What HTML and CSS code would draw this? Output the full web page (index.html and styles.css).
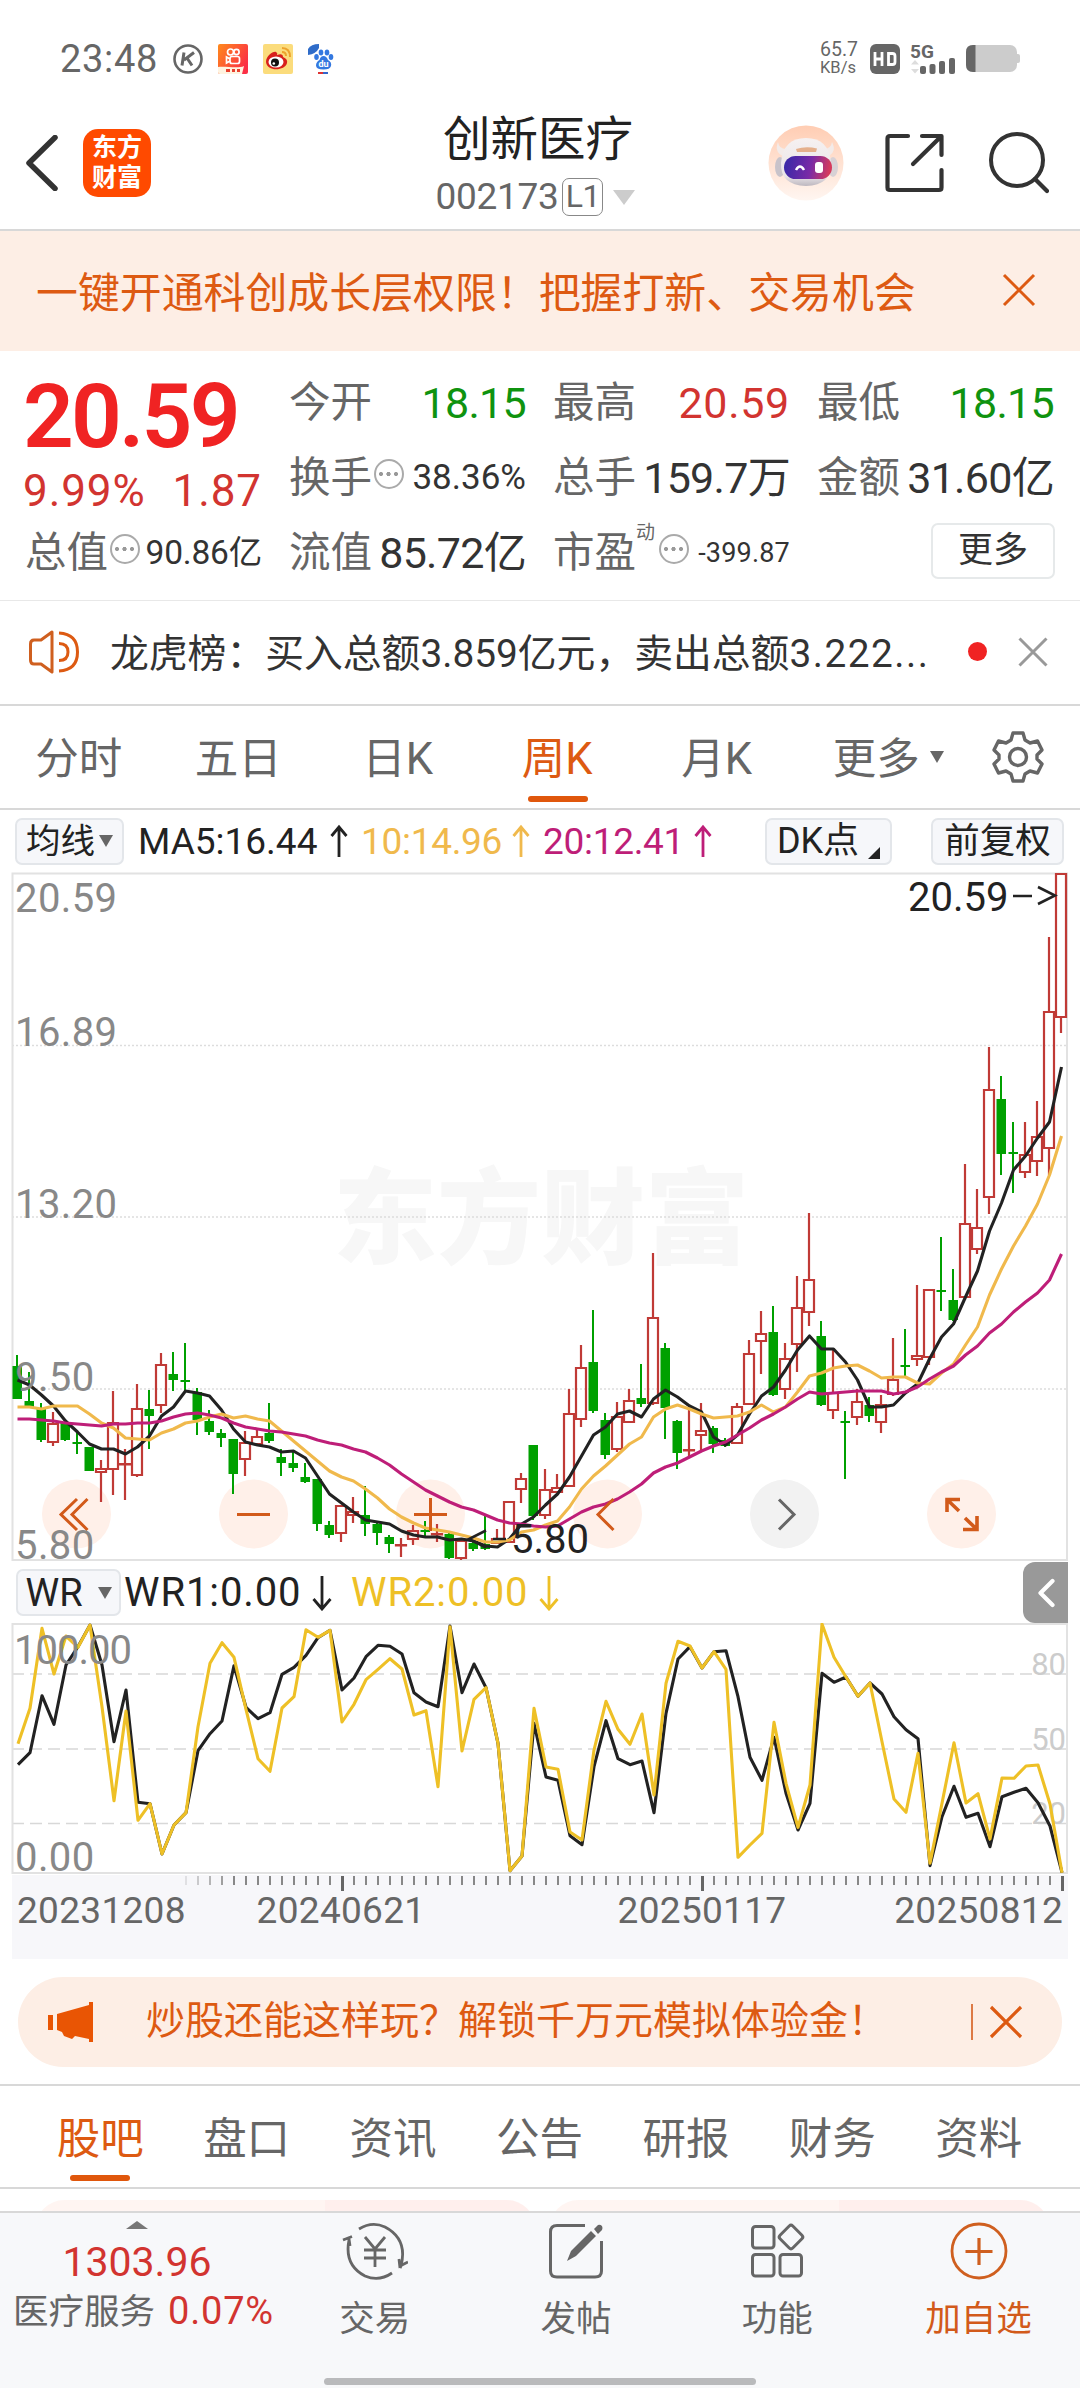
FILE: index.html
```html
<!DOCTYPE html>
<html lang="zh-CN">
<head>
    <meta charset="UTF-8">
    <meta name="viewport" content="width=device-width, initial-scale=1.0">
    <title>创新医疗 002173</title>
    <link rel="stylesheet" href="styles.css">
</head>
<body>
    <div class="status-bar">
        <span class="clock">23:48</span>
        <div class="status-apps">
            <svg width="30" height="30" viewBox="0 0 30 30"><circle cx="15" cy="15" r="13.5" fill="none" stroke="#666" stroke-width="2.6"/><path d="M11 8.500L9 21.500M21 8.500L11 16M14 14L19 21.500" fill="none" stroke="#666" stroke-width="3"/></svg>
            <svg width="30" height="30" viewBox="0 0 30 30">
                <defs><linearGradient id="ks" x1="0" y1="0" x2="1" y2="0.6"><stop offset="0" stop-color="#ff8a1c"/><stop offset="1" stop-color="#fb2f45"/></linearGradient></defs>
                <rect width="30" height="30" rx="2" fill="url(#ks)"/>
                <g fill="none" stroke="#fff" stroke-width="1.700"><circle cx="12.500" cy="8" r="3"/><circle cx="18.500" cy="8" r="2.600"/><rect x="12" y="12.500" width="9.500" height="7" rx="2"/><path d="M12 15L8.500 13V19L12 17"/></g>
                <path d="M0 23C8 22 20 25 26 22L24 30H2Q0 30 0 28Z" fill="#fff3e0"/>
                <path d="M8 25H12V28H8ZM14 25H17V28H14ZM19 25H22V28H19Z" fill="#e8402e"/>
            </svg>
            <svg width="30" height="30" viewBox="0 0 30 30">
                <rect width="30" height="30" rx="2" fill="#fbdc7c"/>
                <path d="M3 18C3 12 10 7 13 8Q15 9 14 11Q20 9 20 13Q25 15 24 19C22 27 4 28 3 18Z" fill="#d8201c"/>
                <ellipse cx="13" cy="18" rx="7.500" ry="5.500" fill="#fff"/><circle cx="12" cy="18.500" r="4" fill="#111"/><circle cx="10.800" cy="19.500" r="1.300" fill="#fff"/>
                <path d="M19 4Q27 4 27 13M19 8Q23 8 23 12" fill="none" stroke="#eda32c" stroke-width="2"/>
            </svg>
            <svg width="26" height="30" viewBox="0 0 26 30">
                <path d="M0 11V5Q3 0 11 0V4Q8 10 0 11Z" fill="#2f6cc9"/>
                <g fill="#3478e0"><ellipse cx="8.500" cy="13" rx="2.300" ry="3"/><ellipse cx="13" cy="8.500" rx="2.300" ry="3"/><ellipse cx="19" cy="8.500" rx="2.300" ry="3"/><ellipse cx="23" cy="13" rx="2.300" ry="3"/><path d="M15.500 12Q18.500 12 20 16Q24 18 23 22Q22 25.500 15.500 25.500Q8 25.500 8 21.500Q8 18 11.500 16Q12.500 12 15.500 12Z"/></g>
                <text x="15.500" y="23" font-size="9" class="du">du</text>
                <path d="M10 29H15" stroke="#d33" stroke-width="2"/><path d="M15 29H20" stroke="#36c" stroke-width="2"/>
            </svg>
        </div>
        <div class="status-right">
            <div class="speed"><span>65.7</span><span class="unit">KB/s</span></div>
            <svg width="30" height="30" viewBox="0 0 30 30"><rect width="30" height="30" rx="6" fill="#666"/><path d="M5 8V22M12 8V22M5 15H12M18.500 9.500H22.500Q25 9.500 25 12V18Q25 20.500 22.500 20.500H18.500Z" fill="none" stroke="#fff" stroke-width="2.800"/></svg>
            <svg class="signal" width="46" height="30" viewBox="0 0 46 30">
                <text x="0" y="14" class="net">5G</text>
                <path d="M5 16L9 20.500H1ZM5 29.500L9 25H1Z" fill="#ddd"/>
                <g fill="#666"><rect x="10" y="22" width="6" height="8" rx="2"/><rect x="19.500" y="20" width="6" height="10" rx="2"/><rect x="29" y="17" width="6" height="13" rx="2"/><rect x="39" y="14" width="6" height="16" rx="2"/></g>
            </svg>
            <svg width="54" height="28" viewBox="0 0 54 28"><rect x="0" y="0" width="51" height="27" rx="7" fill="#ccc"/><path d="M50 9H52Q54 9 54 11V16Q54 18 52 18H50Z" fill="#ccc"/><path d="M9.500 0H7Q0 0 0 7V20Q0 27 7 27H9.500Z" fill="#666"/></svg>
        </div>
    </div>

    <header class="header">
        <div class="header-left">
            <svg width="34" height="56" viewBox="0 0 34 56"><path d="M30 2.500L4 28L30 53.500" fill="none" stroke="#333" stroke-width="5.500" stroke-linecap="round" stroke-linejoin="round"/></svg>
            <div class="logo"><span>东方</span><span>财富</span></div>
        </div>
        <div class="title">
            <h1>创新医疗</h1>
            <div class="code">002173<span class="level">L1</span><i class="caret"></i></div>
        </div>
        <div class="header-right">
            <svg width="76" height="76" viewBox="0 0 76 76">
                <defs>
                    <linearGradient id="rbg" x1="0" y1="0" x2="0" y2="1"><stop offset="0" stop-color="#ffcdb3"/><stop offset="1" stop-color="#fff6f1"/></linearGradient>
                    <linearGradient id="rface" x1="0" y1="0" x2="1" y2="0.1"><stop offset="0" stop-color="#3429a8"/><stop offset="0.6" stop-color="#7a2ba6"/><stop offset="1" stop-color="#d53a5c"/></linearGradient>
                    <linearGradient id="rhead" x1="0" y1="0" x2="0" y2="1"><stop offset="0" stop-color="#f6f1f1"/><stop offset="0.8" stop-color="#e9e4e7"/><stop offset="1" stop-color="#bdb7bf"/></linearGradient>
                </defs>
                <circle cx="38" cy="38" r="37.500" fill="url(#rbg)"/>
                <path d="M10 17Q11 24 18 24L15 31Q6 27 10 17ZM64 17Q63 24 56 24L60 31Q69 27 64 17Z" fill="#f3ebe9"/>
                <ellipse cx="12" cy="42" rx="5" ry="10" fill="#c8c3ca"/><ellipse cx="65" cy="42" rx="5" ry="10" fill="#d8d1d5"/>
                <path d="M38 13Q61 13 63 38Q64 60 38 61Q12 60 13 38Q15 13 38 13Z" fill="url(#rhead)"/>
                <path d="M28 24Q38 21 49 23.500L48 27H29Z" fill="#e5b08c"/>
                <rect x="16" y="31" width="48" height="23" rx="11.500" fill="url(#rface)"/>
                <path d="M28 45Q32 38 36 45" fill="none" stroke="#fff" stroke-width="2.500"/><rect x="47" y="37" width="8" height="11" rx="3" fill="#fff"/>
            </svg>
            <svg width="60" height="60" viewBox="0 0 60 60"><path d="M23 3H5Q2.500 3 2.500 5.500V54.500Q2.500 57 5 57H54Q56.500 57 56.500 54.500V37M37 3H56.500V22M56 3.500L28 31" fill="none" stroke="#333" stroke-width="4.200" stroke-linecap="round" stroke-linejoin="round"/></svg>
            <svg width="60" height="62" viewBox="0 0 60 62"><circle cx="28" cy="28" r="26" fill="none" stroke="#333" stroke-width="4"/><path d="M46 47L58 59" stroke="#333" stroke-width="4.200" stroke-linecap="round"/></svg>
        </div>
    </header>

    <div class="banner">
        <span>一键开通科创成长层权限！把握打新、交易机会</span>
        <svg width="34" height="34" viewBox="0 0 34 34"><path d="M2 2L32 32M32 2L2 32" stroke="#dd5a12" stroke-width="3"/></svg>
    </div>

    <section class="quote">
        <div class="price-box">
            <div class="price">20.59</div>
            <div class="change"><span>9.99%</span><span>1.87</span></div>
        </div>
        <div class="cell"><label>今开</label><b class="down">18.15</b></div>
        <div class="cell"><label>最高</label><b class="up">20.59</b></div>
        <div class="cell"><label>最低</label><b class="down">18.15</b></div>
        <div class="cell"><label>换手</label><i class="more-dot"></i><b class="mid">38.36%</b></div>
        <div class="cell"><label>总手</label><b>159.7万</b></div>
        <div class="cell"><label>金额</label><b>31.60亿</b></div>
        <div class="cell"><label>总值</label><i class="more-dot"></i><b class="small">90.86亿</b></div>
        <div class="cell"><label>流值</label><b>85.72亿</b></div>
        <div class="cell"><label>市盈<sup>动</sup></label><i class="more-dot"></i><b class="tiny">-399.87</b></div>
        <div class="cell cell-btn"><button class="more-btn">更多</button></div>
    </section>

    <div class="news">
        <svg width="50" height="44" viewBox="0 0 50 44"><path d="M23 2L12 10H5Q1.500 10 1.500 14V30Q1.500 34 5 34H12L23 42Z" fill="none" stroke="#cf5f1f" stroke-width="3" stroke-linejoin="round"/><path d="M30 13.500Q39 13.500 39 22Q39 30.500 30 30.500M30 3Q48.500 4 48.500 22Q48.500 40 30 41" fill="none" stroke="#dd5a12" stroke-width="3"/></svg>
        <span class="news-text">龙虎榜：买入总额3.859亿元，卖出总额<span>3.222...</span></span>
        <i class="red-dot"></i>
        <svg width="30" height="30" viewBox="0 0 30 30"><path d="M1.500 1.500L28.500 28.500M28.500 1.500L1.500 28.500" stroke="#999" stroke-width="3"/></svg>
    </div>

    <nav class="periods">
        <span>分时</span>
        <span>五日</span>
        <span>日K</span>
        <span class="active">周K</span>
        <span>月K</span>
        <span class="has-caret">更多<i class="caret-small"></i></span>
        <svg class="gear" width="52" height="52" viewBox="0 0 52 52"><path d="M21 2H31L33 9L38 12L45.500 10L50 19L45 24V28L50 33L45.500 42L38 40L33 43L31 50H21L19 43L14 40L6.500 42L2 33L7 28V24L2 19L6.500 10L14 12L19 9Z" fill="none" stroke="#666" stroke-width="3.400" stroke-linejoin="round"/><circle cx="26" cy="26" r="8.500" fill="none" stroke="#666" stroke-width="3.400"/></svg>
    </nav>

    <div class="ma-bar">
        <button class="chip chip-ma">均线<i class="caret-small"></i></button>
        <span class="ma ma5">MA5:16.44</span>
        <svg class="arrow ma5" width="18" height="34" viewBox="0 0 18 34"><path d="M9 33V3M1.500 12L9 3L16.500 12"/></svg>
        <span class="ma ma10">10:14.96</span>
        <svg class="arrow ma10" width="18" height="34" viewBox="0 0 18 34"><path d="M9 33V3M1.500 12L9 3L16.500 12"/></svg>
        <span class="ma ma20">20:12.41</span>
        <svg class="arrow ma20" width="18" height="34" viewBox="0 0 18 34"><path d="M9 33V3M1.500 12L9 3L16.500 12"/></svg>
        <button class="chip chip-dk">DK点<svg width="12" height="12" viewBox="0 0 12 12"><path d="M12 0V12H0Z" fill="#222"/></svg></button>
        <button class="chip">前复权</button>
    </div>

    <svg class="k-chart" width="1060" height="690" viewBox="10 872 1060 690">
        <text x="541" y="1256" class="watermark">东方财富</text>
        <path d="M12 1045.500H1067M12 1217H1067M12 1389H1067" class="grid-dots"/>
        <path d="M12.500 873.500H1067V1560H12.500Z" class="frame"/>
        <g fill="#fff0e9">
            <circle cx="76.500" cy="1514" r="34.500"/><circle cx="253.500" cy="1514" r="34.500"/><circle cx="430.500" cy="1514" r="34.500"/><circle cx="607.500" cy="1514" r="34.500"/><circle cx="961.500" cy="1514" r="34.500"/>
            <circle cx="784.500" cy="1514" r="34.500" fill="#f2f2f2"/>
        </g>
        <g id="candles"></g>
        <g id="ma-lines"></g>
        <g fill="none" stroke="#d25a1a" stroke-width="3">
            <path d="M77 1499L61 1514.500L77 1530M87.500 1499L72 1514.500L87.500 1530M237 1514.500H270M414 1514.500H447M430.500 1498V1531M613.500 1499L598 1514.500L613.500 1530"/>
            <path d="M960 1499.500H947V1512M947 1499.500L959 1511M977 1516V1529.500H963M977 1529.500L965 1518" stroke-width="3.600"/>
            <path d="M779 1499.500L794 1514.500L779 1529.500" stroke="#666"/>
        </g>
        <g class="axis-label">
            <text x="15" y="912">20.59</text>
            <text x="15" y="1046">16.89</text>
            <text x="15" y="1218">13.20</text>
            <text x="15" y="1391">9.50</text>
            <text x="15" y="1559">5.80</text>
        </g>
        <g class="mark">
            <text x="908" y="911">20.59</text>
            <text x="511" y="1553">5.80</text>
            <path d="M1013 896H1032M1038 887L1055 895.500L1038 904M486 1530.500L469 1539L486 1547.500M493 1539H506"/>
        </g>
    </svg>

    <div class="wr-bar">
        <button class="chip chip-wr">WR<i class="caret-small"></i></button>
        <span class="wr wr1">WR1:0.00</span>
        <svg class="arrow wr1" width="20" height="36" viewBox="0 0 20 36"><path d="M10 1V34M1.500 24L10 34L18.500 24"/></svg>
        <span class="wr wr2">WR2:0.00</span>
        <svg class="arrow wr2" width="20" height="36" viewBox="0 0 20 36"><path d="M10 1V34M1.500 24L10 34L18.500 24"/></svg>
        <div class="drawer"><svg width="18" height="30" viewBox="0 0 18 30"><path d="M15.500 3L3.500 15L15.500 27" fill="none" stroke="#fff" stroke-width="4.200" stroke-linecap="round" stroke-linejoin="round"/></svg></div>
    </div>

    <svg class="wr-chart" width="1060" height="252" viewBox="10 -1 1060 252">
        <path d="M12 50H1067M12 125H1067M12 199.500H1067" class="grid-dash"/>
        <path d="M12.500 0H1067V249H12.500Z" class="frame"/>
        <g class="level-label"><text x="1066" y="51">80</text><text x="1066" y="126">50</text><text x="1066" y="200">20</text></g>
        <g id="wr-lines"></g>
        <g class="axis-label"><text x="14" y="40" class="wr-top">100.00</text><text x="15" y="247">0.00</text></g>
    </svg>

    <svg class="time-axis" width="1056" height="84" viewBox="12 0 1056 84">
        <g id="ticks"></g>
        <text x="17" y="48">20231208</text>
        <text x="341" y="48" text-anchor="middle">20240621</text>
        <text x="702" y="48" text-anchor="middle">20250117</text>
        <text x="1063" y="48" text-anchor="end">20250812</text>
    </svg>

    <div class="promo">
        <svg width="46" height="40" viewBox="0 0 46 40"><path d="M0 13H5V28H0ZM9 12L41 3V0H45V40H41V37L27 34L24 37L16 34L14 30L9 28Z" fill="#e95504"/></svg>
        <span class="promo-text">炒股还能这样玩？解锁千万元模拟体验金！</span>
        <i class="promo-line"></i>
        <svg width="34" height="34" viewBox="0 0 34 34"><path d="M2 2L32 32M32 2L2 32" stroke="#dd5a12" stroke-width="3.200"/></svg>
    </div>

    <nav class="tabs">
        <span class="active">股吧</span>
        <span>盘口</span>
        <span>资讯</span>
        <span>公告</span>
        <span>研报</span>
        <span>财务</span>
        <span>资料</span>
    </nav>

    <div class="cards">
        <div class="card"></div>
        <div class="card"></div>
    </div>

    <footer class="bottom-bar">
        <div class="index-box">
            <i class="caret-up"></i>
            <div class="index-value">1303.96</div>
            <div class="index-name">医疗服务<span>0.07%</span></div>
        </div>
        <div class="nav-item">
            <svg width="66" height="60" viewBox="0 0 66 60"><g fill="none" stroke="#666" stroke-width="2.800"><path d="M17 8Q30 0 43 6Q66 18 59 45L58 47M58 45L66 41M58 47L57 38M50 52Q37 61 23 55Q2 44 7 19M1 19L10 15.500M7 18L8 25"/><path d="M23 16L33 28L43 16M22 29H44M22 37H44M33 28V46"/></g></svg>
            <span>交易</span>
        </div>
        <div class="nav-item">
            <svg width="60" height="60" viewBox="0 0 60 60"><path d="M39 4.500H11Q4.500 4.500 4.500 11V50Q4.500 56 11 56H49Q55.500 56 55.500 50V20" fill="none" stroke="#666" stroke-width="3"/><path d="M21 40L25 30L45 10L50 15L30 35ZM48 8L52 4Q54 3 56 5Q57 7 56 9L52 13Z" fill="#666"/></svg>
            <span>发帖</span>
        </div>
        <div class="nav-item">
            <svg width="60" height="60" viewBox="0 0 60 60"><g fill="none" stroke="#666" stroke-width="3"><rect x="5.500" y="5.500" width="21.500" height="21.500" rx="3"/><rect x="5.500" y="33.500" width="21.500" height="21.500" rx="3"/><rect x="33" y="33.500" width="21.500" height="21.500" rx="3"/><rect x="35" y="7" width="18" height="18" rx="2.500" transform="rotate(45 44 16)"/></g></svg>
            <span>功能</span>
        </div>
        <div class="nav-item orange">
            <svg width="60" height="60" viewBox="0 0 60 60"><path d="M30 17V44M16.500 30.500H43.500" stroke="#cf5f1f" stroke-width="3.200"/><circle cx="30" cy="30" r="27" fill="none" stroke="#cf5f1f" stroke-width="2.800"/></svg>
            <span>加自选</span>
        </div>
        <i class="home-line"></i>
    </footer>
    <script src="script.js"></script>
</body>
</html>
```

FILE: styles.css
```css
* {
    box-sizing: border-box;
}
body {
    margin: 0;
    width: 1080px;
    height: 2388px;
    overflow: hidden;
    background: #fff;
    color: #333;
    font-family: Roboto, "Noto Sans CJK SC", sans-serif;
    display: flex;
    flex-direction: column;
}
body > * {
    flex: none;
}
svg {
    display: block;
    flex: none;
}
i {
    font-style: normal;
}
button {
    font-family: inherit;
    color: #222;
    padding: 0;
}

/* status bar */
.status-bar {
    height: 118px;
    padding: 0 60px;
    display: flex;
    align-items: center;
    color: #666;
}
.clock {
    font-size: 38px;
    width: 113px;
    letter-spacing: 0.7px;
}
.status-apps {
    display: flex;
    gap: 15px;
}
.du {
    fill: #fff;
    font-weight: bold;
    text-anchor: middle;
}
.status-right {
    margin-left: auto;
    display: flex;
    align-items: center;
    gap: 10px;
}
.speed {
    display: flex;
    flex-direction: column;
    font-size: 19.5px;
    line-height: 18px;
    width: 40px;
}
.speed .unit {
    font-size: 16.5px;
}
.signal {
    overflow: visible;
}
.net {
    font-size: 19px;
    font-weight: bold;
    fill: #666;
}

/* header */
.header {
    height: 113px;
    padding: 0 31px 0 25px;
    border-bottom: 2px solid #d8d8d8;
    display: grid;
    grid-template-columns: 1fr auto 1fr;
    grid-template-rows: 90px;
    align-items: center;
}
.header-left, .header-right {
    display: flex;
    align-items: center;
}
.header-left {
    gap: 24px;
}
.header-right {
    justify-content: flex-end;
    gap: 44px;
}
.header-right svg:first-child {
    margin-right: -3px;
}
.logo {
    width: 68px;
    height: 68px;
    border-radius: 15px;
    background: #ff4a00;
    color: #fff;
    font-size: 25px;
    font-weight: 700;
    line-height: 30px;
    display: flex;
    flex-direction: column;
    align-items: center;
    justify-content: center;
}
.title {
    text-align: center;
    padding: 8px 3px 0 0;
}
.title h1 {
    margin: 0;
    padding-left: 5px;
    font-size: 47.5px;
    font-weight: 400;
    line-height: 60px;
    color: #222;
}
.code {
    display: flex;
    align-items: center;
    font-size: 37px;
    line-height: 48px;
    height: 55px;
    color: #666;
    letter-spacing: -0.3px;
}
.level {
    margin-left: 4px;
    width: 41px;
    height: 38px;
    line-height: 35px;
    font-size: 32px;
    border: 1.5px solid #888;
    border-radius: 7px;
    text-align: center;
}
.caret {
    margin-left: 10px;
    border: 11px solid transparent;
    border-top: 15px solid #ccc;
    border-bottom: 0;
}

.banner {
    height: 120px;
    padding: 0 44px 3px 36px;
    background: #fdeee5;
    color: #dd5a12;
    font-size: 41.9px;
    display: flex;
    align-items: center;
    justify-content: space-between;
}

/* quote */
.quote {
    height: 250px;
    padding: 14px 26px 0 25px;
    border-bottom: 1px solid #e8e8e8;
    display: grid;
    grid-template-columns: repeat(4, 237px);
    grid-template-rows: repeat(3, 75px);
    column-gap: 27px;
}
.price-box {
    grid-row: span 2;
    color: #f02323;
}
.price {
    font-size: 89px;
    font-weight: 600;
    line-height: 104px;
    letter-spacing: -2.8px;
    margin-left: -2px;
}
.change {
    display: flex;
    justify-content: space-between;
    font-size: 44px;
    line-height: 44px;
    letter-spacing: 0.9px;
    margin-left: -2px;
    color: #d23430;
}
.cell {
    display: flex;
    align-items: center;
    font-size: 41.500px;
    line-height: 60px;
    white-space: nowrap;
}
.cell label {
    color: #666;
    position: relative;
}
.cell b {
    margin-left: auto;
    font-size: 43px;
    font-weight: 400;
    letter-spacing: -0.7px;
}
.cell .up {
    letter-spacing: 0.7px;
}
.cell .mid {
    font-size: 35px;
    letter-spacing: 0;
}
.cell .small {
    font-size: 33.5px;
    letter-spacing: -0.2px;
}
.cell .tiny {
    font-size: 27px;
    letter-spacing: 0.2px;
}
.up {
    color: #d23430;
}
.down {
    color: #0f930f;
}
.more-dot {
    width: 30px;
    height: 30px;
    margin: -8px 0 0 2px;
    border: 2.500px solid #aaa;
    border-radius: 50%;
    background: radial-gradient(circle 2.2px at 5px 50%, #999 90%, transparent),
        radial-gradient(circle 2.2px at 12.5px 50%, #999 90%, transparent),
        radial-gradient(circle 2.2px at 20px 50%, #999 90%, transparent);
}
.cell sup {
    position: absolute;
    left: 83px;
    top: -20px;
    font-size: 19px;
}
.cell label:has(sup) {
    margin-right: 21px;
}
.cell-btn {
    justify-content: flex-end;
}
.more-btn {
    width: 124px;
    height: 56px;
    margin: -4px -1px 0 0;
    border: 2px solid #e6e9ea;
    border-radius: 7px;
    background: #fff;
    color: #333;
    font-size: 35px;
    line-height: 50px;
}

.news {
    height: 105px;
    padding: 0 31px 2px 29px;
    border-bottom: 2px solid #d8d8d8;
    display: flex;
    align-items: center;
}
.news-text {
    width: 858px;
    margin-left: 31px;
    padding-bottom: 3px;
    font-size: 38.800px;
    white-space: nowrap;
}
.news-text span {
    letter-spacing: 1.5px;
}
.red-dot {
    width: 19px;
    height: 19px;
    margin-right: 31px;
    border-radius: 50%;
    background: #f02323;
}

/* period tabs */
.periods {
    height: 104px;
    border-bottom: 2px solid #d8d8d8;
    display: flex;
    align-items: center;
    color: #666;
    font-size: 43.5px;
}
.periods span {
    width: 159.500px;
    height: 100%;
    padding: 22px 2px 0 0;
    line-height: 64px;
    text-align: center;
    position: relative;
}
.periods .active, .tabs .active {
    color: #dd5a12;
}
.periods .active::after, .tabs .active::after {
    content: "";
    position: absolute;
    left: calc(50% - 30px);
    bottom: 6px;
    width: 60px;
    height: 6px;
    border-radius: 3px;
    background: #e0570c;
}
.caret-small {
    display: inline-block;
    border: 7.5px solid transparent;
    border-top: 12px solid #666;
    border-bottom: 0;
}
.periods .caret-small {
    position: absolute;
    left: 132px;
    top: 45px;
}
.gear {
    margin-left: 35px;
}

/* indicator bars */
.ma-bar, .wr-bar {
    height: 62px;
    padding: 0 16px 0 15px;
    display: flex;
    align-items: center;
}
.chip {
    width: 133px;
    height: 47px;
    border: 2px solid #e3e6ea;
    border-radius: 7px;
    background: #f6f7fa;
    font-size: 35.500px;
    line-height: 40px;
    display: flex;
    align-items: center;
    justify-content: center;
}
.chip-ma {
    width: 109px;
    font-size: 34.500px;
    gap: 4px;
}
.chip-dk {
    width: 127px;
    margin: 0 39px 0 auto;
    gap: 9px;
    font-size: 36px;
}
.chip-dk svg {
    align-self: flex-end;
    margin-bottom: 4px;
}
.ma {
    font-size: 37px;
    margin: 0 9px 0 13px;
}
.chip-ma + .ma {
    width: 185px;
    margin: 0 7px 0 14px;
}
.ma10.ma, .ma20.ma {
    width: 142px;
    letter-spacing: -0.3px;
}
.arrow {
    fill: none;
    stroke: #222;
    stroke-width: 2.8px;
}
.ma5, .wr1 {
    color: #222;
}
.ma10 {
    color: #f0b94c;
    stroke: #f0b94c;
}
.ma20 {
    color: #be1e78;
    stroke: #be1e78;
}
.ma, .wr {
    stroke: none;
}
.wr-bar {
    height: 61px;
    padding: 0 12px 0 16px;
}
.chip-wr {
    width: 105px;
    font-size: 38px;
    gap: 15px;
}
.wr {
    width: 181px;
    font-size: 40px;
    letter-spacing: 0.9px;
    margin: 0 7px 0 3px;
}
.wr2 {
    color: #eec026;
    stroke: #eec026;
}
.wr2.wr {
    margin-left: 19px;
    stroke: none;
}
.drawer {
    width: 45px;
    height: 61px;
    margin-left: auto;
    padding-left: 14px;
    border-radius: 12px 0 0 12px;
    background: #999;
    display: flex;
    align-items: center;
}

/* charts */
.k-chart, .wr-chart {
    margin-left: 10px;
}
.watermark {
    font-size: 104px;
    font-weight: 900;
    fill: #f7f7f7;
    text-anchor: middle;
}
.frame {
    fill: none;
    stroke: #e2e2e2;
    stroke-width: 2px;
}
.grid-dots {
    stroke: #ddd;
    stroke-width: 1.5px;
    stroke-dasharray: 2 2;
}
.grid-dash {
    stroke: #d8d8d8;
    stroke-width: 1.5px;
    stroke-dasharray: 12 6;
}
.axis-label {
    font-size: 40px;
    fill: #888;
    letter-spacing: 0.4px;
}
.wr-top {
    letter-spacing: -1px;
}
.level-label {
    font-size: 31px;
    fill: #ccc;
    text-anchor: end;
}
.mark text {
    font-size: 40px;
    fill: #222;
}
.mark path {
    fill: none;
    stroke: #222;
    stroke-width: 2.6px;
}
.candle-up {
    fill: none;
    stroke: #c03a36;
    stroke-width: 2.2px;
}
.candle-down {
    fill: #00a000;
}
.line {
    fill: none;
    stroke-width: 3.1px;
    stroke-linejoin: round;
}
.time-axis {
    margin-left: 12px;
    height: 84px;
    background: #f7f7fa;
    font-size: 37px;
    fill: #666;
    letter-spacing: 0.3px;
}

.promo {
    height: 90px;
    margin: 18px 18px 17px;
    padding: 0 39px 0 30px;
    border-radius: 45px;
    background: #fdeee5;
    color: #dd5a12;
    display: flex;
    align-items: center;
}
.promo-text {
    margin-left: 52px;
    font-size: 39px;
    line-height: 60px;
    padding-bottom: 2px;
}
.promo-line {
    width: 2px;
    height: 36px;
    margin: 0 16px 0 auto;
    background: #dd7a45;
}

.tabs {
    height: 105px;
    padding: 0 28px 0 27px;
    border-top: 2px solid #d8d8d8;
    border-bottom: 2px solid #d8d8d8;
    display: flex;
    color: #666;
    font-size: 43.500px;
    line-height: 107px;
}
.tabs span {
    flex: 1;
    text-align: center;
    position: relative;
}

.cards {
    height: 22px;
    padding: 11px 31px 0 36px;
    display: flex;
    gap: 15px;
    overflow: hidden;
}
.card {
    flex: 1;
    height: 60px;
    border-radius: 28px;
    background: linear-gradient(90deg, #fff5f2 58%, #ffefed 58%);
}

/* bottom bar */
.bottom-bar {
    height: 177px;
    border-top: 2px solid #d8d8d8;
    background: #f7f8fa;
    color: #666;
    display: flex;
    position: relative;
}
.index-box {
    width: 274px;
    padding-top: 8px;
    display: flex;
    flex-direction: column;
    align-items: center;
}
.caret-up {
    border: 11px solid transparent;
    border-bottom: 8px solid #777;
    border-top: 0;
}
.index-value {
    font-size: 41px;
    line-height: 52px;
    margin-top: 7px;
    color: #d23430;
}
.index-name {
    margin-left: 13px;
    font-size: 35.500px;
    line-height: 46px;
    white-space: nowrap;
}
.index-name span {
    margin-left: 13px;
    font-size: 38px;
    letter-spacing: 0.8px;
    color: #d23430;
}
.nav-item {
    width: 201.300px;
    padding-top: 8px;
    display: flex;
    flex-direction: column;
    align-items: center;
    font-size: 35.500px;
    line-height: 52px;
    gap: 12px;
}
.orange {
    color: #d25a1a;
}
.home-line {
    position: absolute;
    left: 324px;
    bottom: 3px;
    width: 432px;
    height: 7px;
    border-radius: 4px;
    background: #b9babc;
}
```

FILE: script.js
```js
// one row per week: [up, high, body top, body bottom, low]
const candles = [
    [0,1355,1366,1399,1399],[0,1372,1401,1407,1407],[0,1403,1409,1440,1442],[1,1412,1423,1443,1446],
    [0,1420,1422,1440,1441],[0,1432,1442,1444,1454],[0,1447,1447,1471,1471],[1,1460,1468,1473,1502],
    [1,1391,1422,1470,1495],[1,1449,1463,1465,1500],[1,1384,1408,1476,1477],[0,1390,1409,1416,1449],
    [1,1353,1364,1406,1413],[0,1352,1374,1380,1391],[0,1343,1380,1382,1391],[0,1388,1392,1420,1435],
    [0,1410,1421,1432,1435],[0,1429,1433,1438,1447],[0,1439,1439,1474,1494],[1,1431,1442,1460,1476],
    [1,1430,1436,1445,1445],[0,1403,1433,1441,1443],[0,1449,1457,1463,1476],[0,1452,1463,1468,1472],
    [0,1463,1477,1482,1483],[0,1479,1479,1524,1531],[0,1521,1525,1535,1538],[1,1505,1505,1534,1542],
    [1,1497,1511,1516,1523],[0,1486,1515,1524,1536],[0,1523,1524,1533,1545],[0,1535,1537,1544,1553],
    [1,1538,1544,1546,1557],[1,1525,1530,1540,1545],[0,1521,1530,1532,1536],[1,1524,1533,1535,1542],
    [0,1533,1534,1558,1559],[1,1539,1540,1559,1560],[0,1540,1543,1549,1551],[0,1516,1544,1549,1550],
    [1,1529,1538,1544,1544],[1,1501,1501,1543,1543],[1,1473,1478,1490,1503],[0,1445,1445,1516,1520],
    [1,1469,1489,1516,1519],[1,1474,1487,1493,1493],[1,1389,1413,1487,1487],[1,1345,1367,1420,1427],
    [0,1310,1362,1411,1413],[0,1413,1420,1455,1459],[1,1402,1416,1450,1452],[1,1389,1400,1423,1423],
    [0,1364,1398,1404,1407],[1,1253,1317,1404,1405],[0,1343,1348,1408,1439],[0,1420,1421,1453,1469],
    [1,1410,1449,1451,1456],[1,1403,1430,1436,1452],[0,1426,1428,1444,1453],[0,1438,1440,1446,1447],
    [1,1403,1406,1444,1444],[1,1340,1353,1405,1405],[1,1311,1333,1342,1374],[0,1306,1332,1395,1396],
    [1,1343,1358,1390,1399],[1,1276,1307,1345,1372],[1,1213,1279,1313,1326],[0,1321,1336,1405,1406],
    [1,1350,1392,1411,1419],[0,1411,1421,1423,1479],[1,1389,1401,1418,1425],[0,1397,1405,1416,1422],
    [1,1395,1404,1423,1433],[1,1338,1379,1395,1396],[0,1329,1365,1367,1376],[1,1285,1355,1360,1366],
    [1,1289,1289,1358,1365],[0,1237,1290,1292,1311],[0,1269,1300,1320,1321],[1,1164,1223,1298,1300],
    [1,1189,1227,1250,1254],[1,1047,1089,1198,1214],[0,1076,1099,1154,1175],[0,1122,1152,1154,1193],
    [1,1122,1154,1173,1178],[1,1101,1136,1162,1176],[1,937,1011,1149,1175],[1,873,873,1018,1033]
];

const ma5 = [1380,1385,1395,1406,1421,1432,1444,1449,1449,1454,1447,1436,1416,1407,1391,1393,1396,1410,1429,1442,1445,1447,1452,1451,1458,1476,1494,1503,1512,1520,1522,1524,1531,1535,1537,1537,1540,1539,1541,1546,1547,1539,1524,1517,1505,1494,1477,1456,1435,1427,1414,1411,1417,1399,1390,1397,1406,1412,1437,1445,1435,1414,1396,1387,1370,1350,1336,1349,1349,1362,1380,1407,1407,1405,1393,1384,1359,1337,1324,1297,1271,1231,1203,1170,1156,1138,1122,1067];
const ma10 = [1407,1407,1409,1406,1406,1406,1414,1423,1428,1438,1439,1440,1433,1429,1423,1421,1417,1414,1418,1416,1419,1421,1431,1441,1451,1461,1471,1477,1481,1489,1498,1509,1517,1523,1528,1530,1532,1535,1538,1542,1542,1540,1532,1530,1525,1521,1507,1489,1476,1466,1455,1444,1437,1417,1409,1405,1409,1414,1418,1417,1416,1412,1405,1412,1407,1392,1376,1373,1368,1366,1365,1371,1378,1377,1377,1383,1384,1373,1364,1345,1327,1295,1269,1246,1226,1204,1175,1136];
const ma20 = [1419,1419,1420,1421,1423,1424,1425,1426,1424,1424,1423,1423,1421,1417,1414,1413,1415,1418,1423,1427,1429,1431,1432,1434,1436,1440,1443,1445,1449,1452,1458,1465,1474,1482,1490,1496,1502,1507,1510,1515,1520,1523,1524,1526,1527,1526,1519,1512,1507,1504,1499,1492,1484,1473,1467,1463,1457,1451,1446,1442,1435,1428,1420,1414,1407,1399,1392,1394,1393,1392,1391,1391,1391,1394,1392,1387,1379,1372,1366,1355,1346,1333,1324,1312,1302,1293,1280,1254];

const wr1 = [644,608,437,523,345,290,225,345,575,420,757,761,912,825,788,602,551,513,347,472,506,488,373,352,316,263,241,420,384,320,286,289,312,428,456,470,228,428,342,413,580,962,918,520,681,691,857,884,650,512,626,644,633,788,490,327,290,354,305,302,440,622,691,562,730,840,760,370,397,381,439,399,432,500,539,566,947,800,709,802,790,890,740,727,715,758,828,968];
const wr2 = [581,475,235,372,258,292,225,470,752,483,811,761,912,825,788,530,340,278,322,478,626,664,474,440,239,262,241,516,463,389,358,326,357,495,482,710,230,603,448,413,580,962,918,475,651,658,846,870,600,454,538,583,492,735,400,274,288,354,305,358,922,885,850,517,700,832,705,222,322,381,439,399,575,747,787,610,940,760,578,759,731,867,684,685,648,645,762,968];

const STEP = 12;

function drawCandles() {
    let html = '';
    candles.forEach(([up, high, top, bottom, low], i) => {
        const x = 17 + i * STEP;
        if (up) {
            const h = Math.max(bottom - top - 2, 0.5);
            html += `<path class="candle-up" d="M${x} ${high}V${top}M${x} ${bottom}V${low}M${x - 5} ${top + 1}h10v${h}h-10z"/>`;
        } else {
            const left = Math.max(x - 4.5, 12);
            html += `<path class="candle-down" d="M${x - 1} ${high}h2V${low}h-2zM${left} ${top}H${x + 5}V${bottom}H${left}z"/>`;
        }
    });
    document.getElementById('candles').innerHTML = html;
}

function line(points, color, x0, toY) {
    const list = points.map((p, i) => `${x0 + i * STEP},${toY(p).toFixed(1)}`).join(' ');
    return `<polyline class="line" stroke="${color}" points="${list}"/>`;
}

function drawTicks() {
    let html = '';
    for (let i = 14; i <= 87; i++) {
        const major = i % 30 === 27;
        const opacity = Math.min(1, (i - 13) / 5);
        html += `<rect x="${17 + i * STEP}" y="1" width="${major ? 3 : 2}" height="${major ? 15 : 9}" fill="${major ? '#666' : '#888'}" opacity="${opacity}"/>`;
    }
    document.getElementById('ticks').innerHTML = html;
}

drawCandles();
document.getElementById('ma-lines').innerHTML =
    line(ma5, '#222', 17.5, y => y) + line(ma10, '#f0b94c', 17.5, y => y) + line(ma20, '#be1e78', 17.5, y => y);
// WR readings run from 222 (100) down to 968 (0), three per pixel
document.getElementById('wr-lines').innerHTML =
    line(wr1, '#222', 18, y => (y - 222) / 3) + line(wr2, '#eec026', 18, y => (y - 222) / 3);
drawTicks();
```
